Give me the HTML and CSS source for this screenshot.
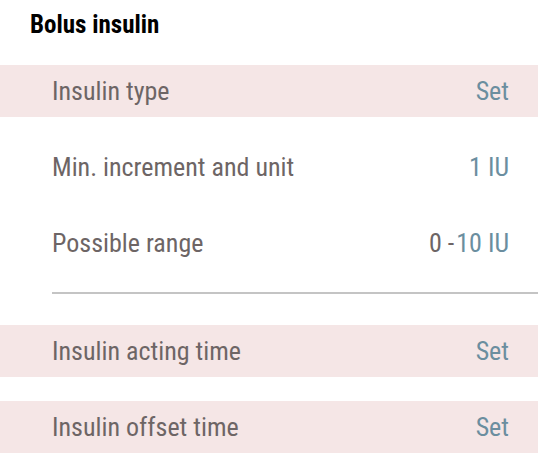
FILE: index.html
```html
<!DOCTYPE html>
<html>
<head>
<meta charset="utf-8">
<link rel="stylesheet" href="styles.css">
</head>
<body>
<div class="page">
  <h1 class="title">Bolus insulin</h1>
  <div class="row band"><span class="label">Insulin type</span><span class="value">Set</span></div>
  <div class="row gap"><span class="label">Min. increment and unit</span><span class="value">1 IU</span></div>
  <div class="row gap"><span class="label">Possible range</span><span class="value"><span class="muted">0 -</span><span class="range-max">10 IU</span></span></div>
  <div class="divider"></div>
  <div class="row band after-divider"><span class="label">Insulin acting time</span><span class="value">Set</span></div>
  <div class="row band gap"><span class="label">Insulin offset time</span><span class="value">Set</span></div>
</div>
</body>
</html>
```

FILE: styles.css
```css
html, body {
  margin: 0;
  padding: 0;
  background: #ffffff;
}
.page {
  width: 538px;
  font-family: "Roboto Condensed", "Liberation Sans Narrow", "DejaVu Sans Condensed", Roboto, sans-serif;
  font-stretch: condensed;
}
.title {
  margin: 0 0 26px 0;
  padding: 10px 0 0 30px;
  font-size: 25px;
  line-height: 29px;
  font-weight: 700;
  color: #000000;
}
.row {
  height: 52px;
  display: flex;
  align-items: center;
  justify-content: space-between;
  padding: 0 29px 0 52px;
  font-size: 26px;
}
.band {
  background: #f5e6e6;
}
.gap {
  margin-top: 24px;
}
.label {
  color: #6d6565;
}
.value {
  color: #6b8e9f;
}
.muted {
  color: #6d6565;
}
.range-max {
  margin-left: 2px;
}
.divider {
  margin: 23px 0 0 52px;
  height: 2px;
  background: #c4c4c4;
}
.after-divider {
  margin-top: 31px;
}
```
